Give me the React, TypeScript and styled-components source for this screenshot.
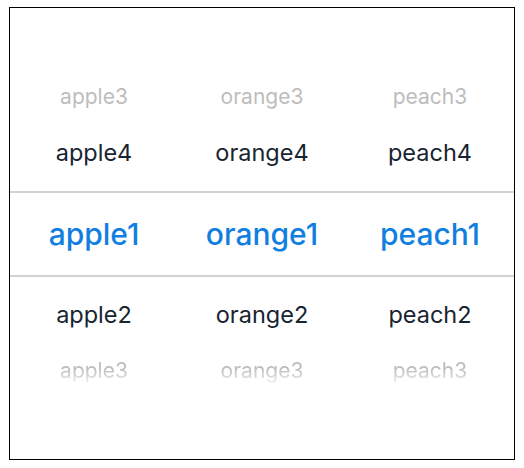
import styled, { createGlobalStyle, css } from 'styled-components';

const GlobalStyle = createGlobalStyle`
    html, body {
        margin: 0;
        padding: 0;
        background: #ffffff;
    }
    body {
        font-family: Inter, "Noto Sans", "Liberation Sans", sans-serif;
    }
`;

const columns = [
    ['apple3', 'apple4', 'apple1', 'apple2', 'apple3'],
    ['orange3', 'orange4', 'orange1', 'orange2', 'orange3'],
    ['peach3', 'peach4', 'peach1', 'peach2', 'peach3'],
];

type Level = 'far' | 'near' | 'selected';

const Frame = styled.div`
    box-sizing: border-box;
    margin: 7px 0 0 9px;
    width: 506px;
    height: 453px;
    border: 1px solid #000;
    display: flex;
    flex-direction: column;
    justify-content: center;
`;

const Row = styled.div<{ $level: Level; $fade?: 'up' | 'down' }>`
    display: grid;
    grid-template-columns: repeat(3, 1fr);
    align-items: center;
    height: 56px;

    ${p => p.$level === 'far' && css`
        color: #bdbdbd;
        font-size: 21px;
    `}
    ${p => p.$level === 'near' && css`
        color: #182431;
        font-size: 23.5px;
    `}
    ${p => p.$fade === 'down' && css`
        -webkit-mask-image: linear-gradient(to bottom, #000 45%, rgba(0,0,0,0.15) 75%);
        mask-image: linear-gradient(to bottom, #000 45%, rgba(0,0,0,0.15) 75%);
    `}
`;

const SelectedBand = styled(Row)`
    box-sizing: border-box;
    height: 86px;
    margin: 10px 0;
    border-top: 2px solid #d3d3d3;
    border-bottom: 2px solid #d3d3d3;
    color: #127fe0;
    font-size: 30px;
    font-weight: 500;
`;

const Cell = styled.span`
    text-align: center;
    line-height: 1;
`;

function PickerRow({ index, level, fade }: { index: number; level: Level; fade?: 'up' | 'down' }) {
    const Comp = level === 'selected' ? SelectedBand : Row;
    return (
        <Comp $level={level} $fade={fade}>
            {columns.map((col, i) => <Cell key={i}>{col[index]}</Cell>)}
        </Comp>
    );
}

export default function App() {
    return (
        <>
            <GlobalStyle/>
            <Frame>
                <PickerRow index={0} level="far"/>
                <PickerRow index={1} level="near"/>
                <PickerRow index={2} level="selected"/>
                <PickerRow index={3} level="near"/>
                <PickerRow index={4} level="far" fade="down"/>
            </Frame>
        </>
    );
}
